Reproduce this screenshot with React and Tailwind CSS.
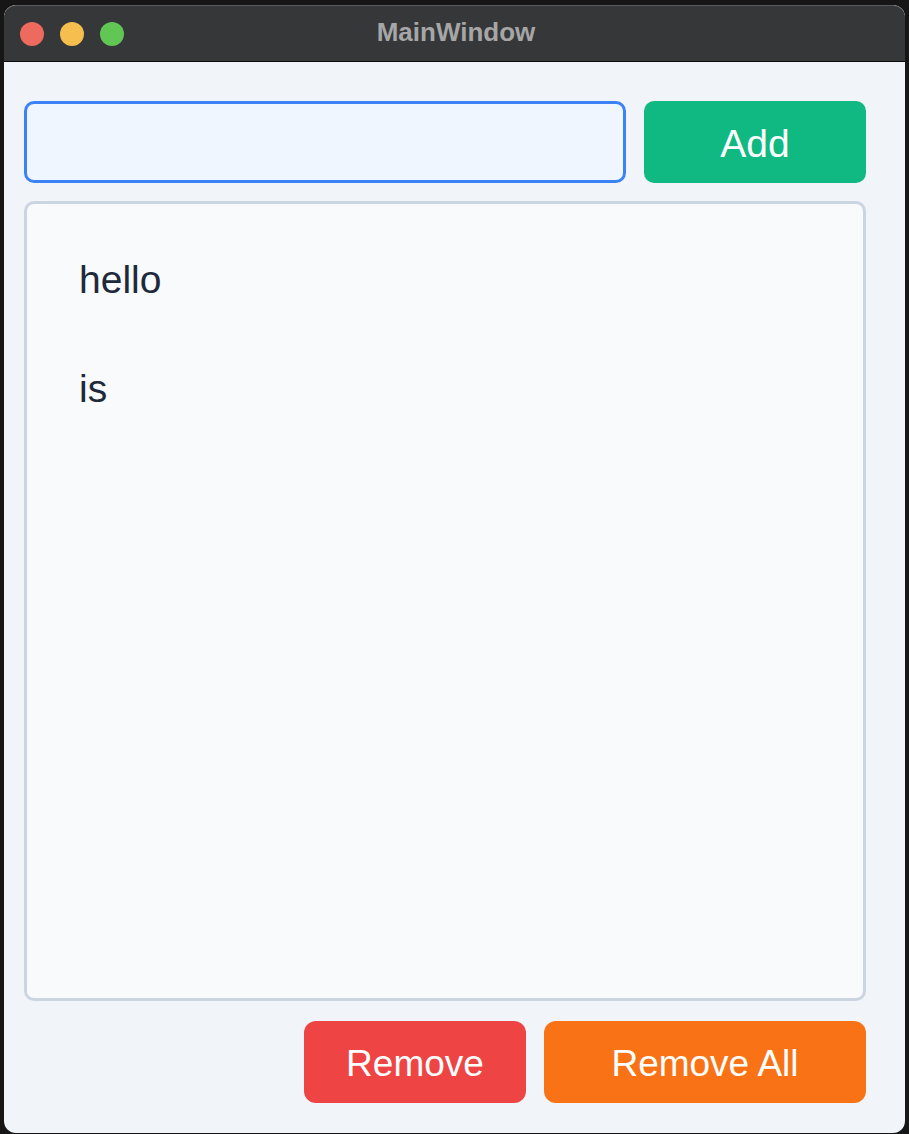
import React, { useState } from "react";

const App = () => {
  const [items] = useState(["hello", "is"]);
  const [text, setText] = useState("");

  return (
    <div
      className="w-[909px] h-[1134px] bg-[#161616] overflow-hidden pt-[5px] pl-[4px]"
      style={{ fontFamily: '"Liberation Sans", Arial, sans-serif' }}
    >
      <div className="w-[901px] h-[1128px] rounded-[12px] overflow-hidden flex flex-col bg-[#f1f5f9]">
        {/* title bar */}
        <div className="relative h-[57px] shrink-0 bg-[#363739] border-b border-[#0b0b0b] flex items-center pl-[16px] gap-[16px] rounded-t-[12px] border-t border-t-[#5a5a5c]">
          <span className="w-[24px] h-[24px] rounded-full bg-[#ee6a5f]" />
          <span className="w-[24px] h-[24px] rounded-full bg-[#f5be4f]" />
          <span className="w-[24px] h-[24px] rounded-full bg-[#62c655]" />
          <div className="absolute inset-0 flex items-center justify-center pl-[3px] pb-[2px] text-[26px] font-bold text-[#a6a6a7] pointer-events-none">
            MainWindow
          </div>
        </div>

        {/* content */}
        <div className="flex-1 flex flex-col pt-[39px] pl-[20px] pr-[39px] pb-[30px] gap-[18px]">
          <div className="flex gap-[18px] h-[82px] shrink-0">
            <input
              value={text}
              onChange={(e) => setText(e.target.value)}
              className="flex-1 h-full rounded-[10px] border-[3px] border-[#3b82f6] bg-[#eff6ff] px-4 text-[38px] text-[#1e293b] outline-none"
            />
            <button className="w-[222px] h-full rounded-[10px] bg-[#10b981] text-white text-[39px] leading-none pt-[2px]">
              Add
            </button>
          </div>

          <div className="flex-1 rounded-[10px] border-[3px] border-[#cbd5e1] bg-[#f8fafc] pt-[21px] pl-[52px]">
            {items.map((value, index) => (
              <div key={index} className="h-[109px] leading-[109px] text-[39px] text-[#1e293b]">
                {value}
              </div>
            ))}
          </div>

          <div className="flex justify-end gap-[18px] h-[82px] shrink-0 mt-[2px]">
            <button className="w-[222px] h-full rounded-[12px] bg-[#ef4444] text-white text-[37px] leading-none pt-[2px]">
              Remove
            </button>
            <button className="w-[322px] h-full rounded-[12px] bg-[#f97316] text-white text-[37px] leading-none pt-[2px]">
              Remove All
            </button>
          </div>
        </div>
      </div>
    </div>
  );
};

export default App;
